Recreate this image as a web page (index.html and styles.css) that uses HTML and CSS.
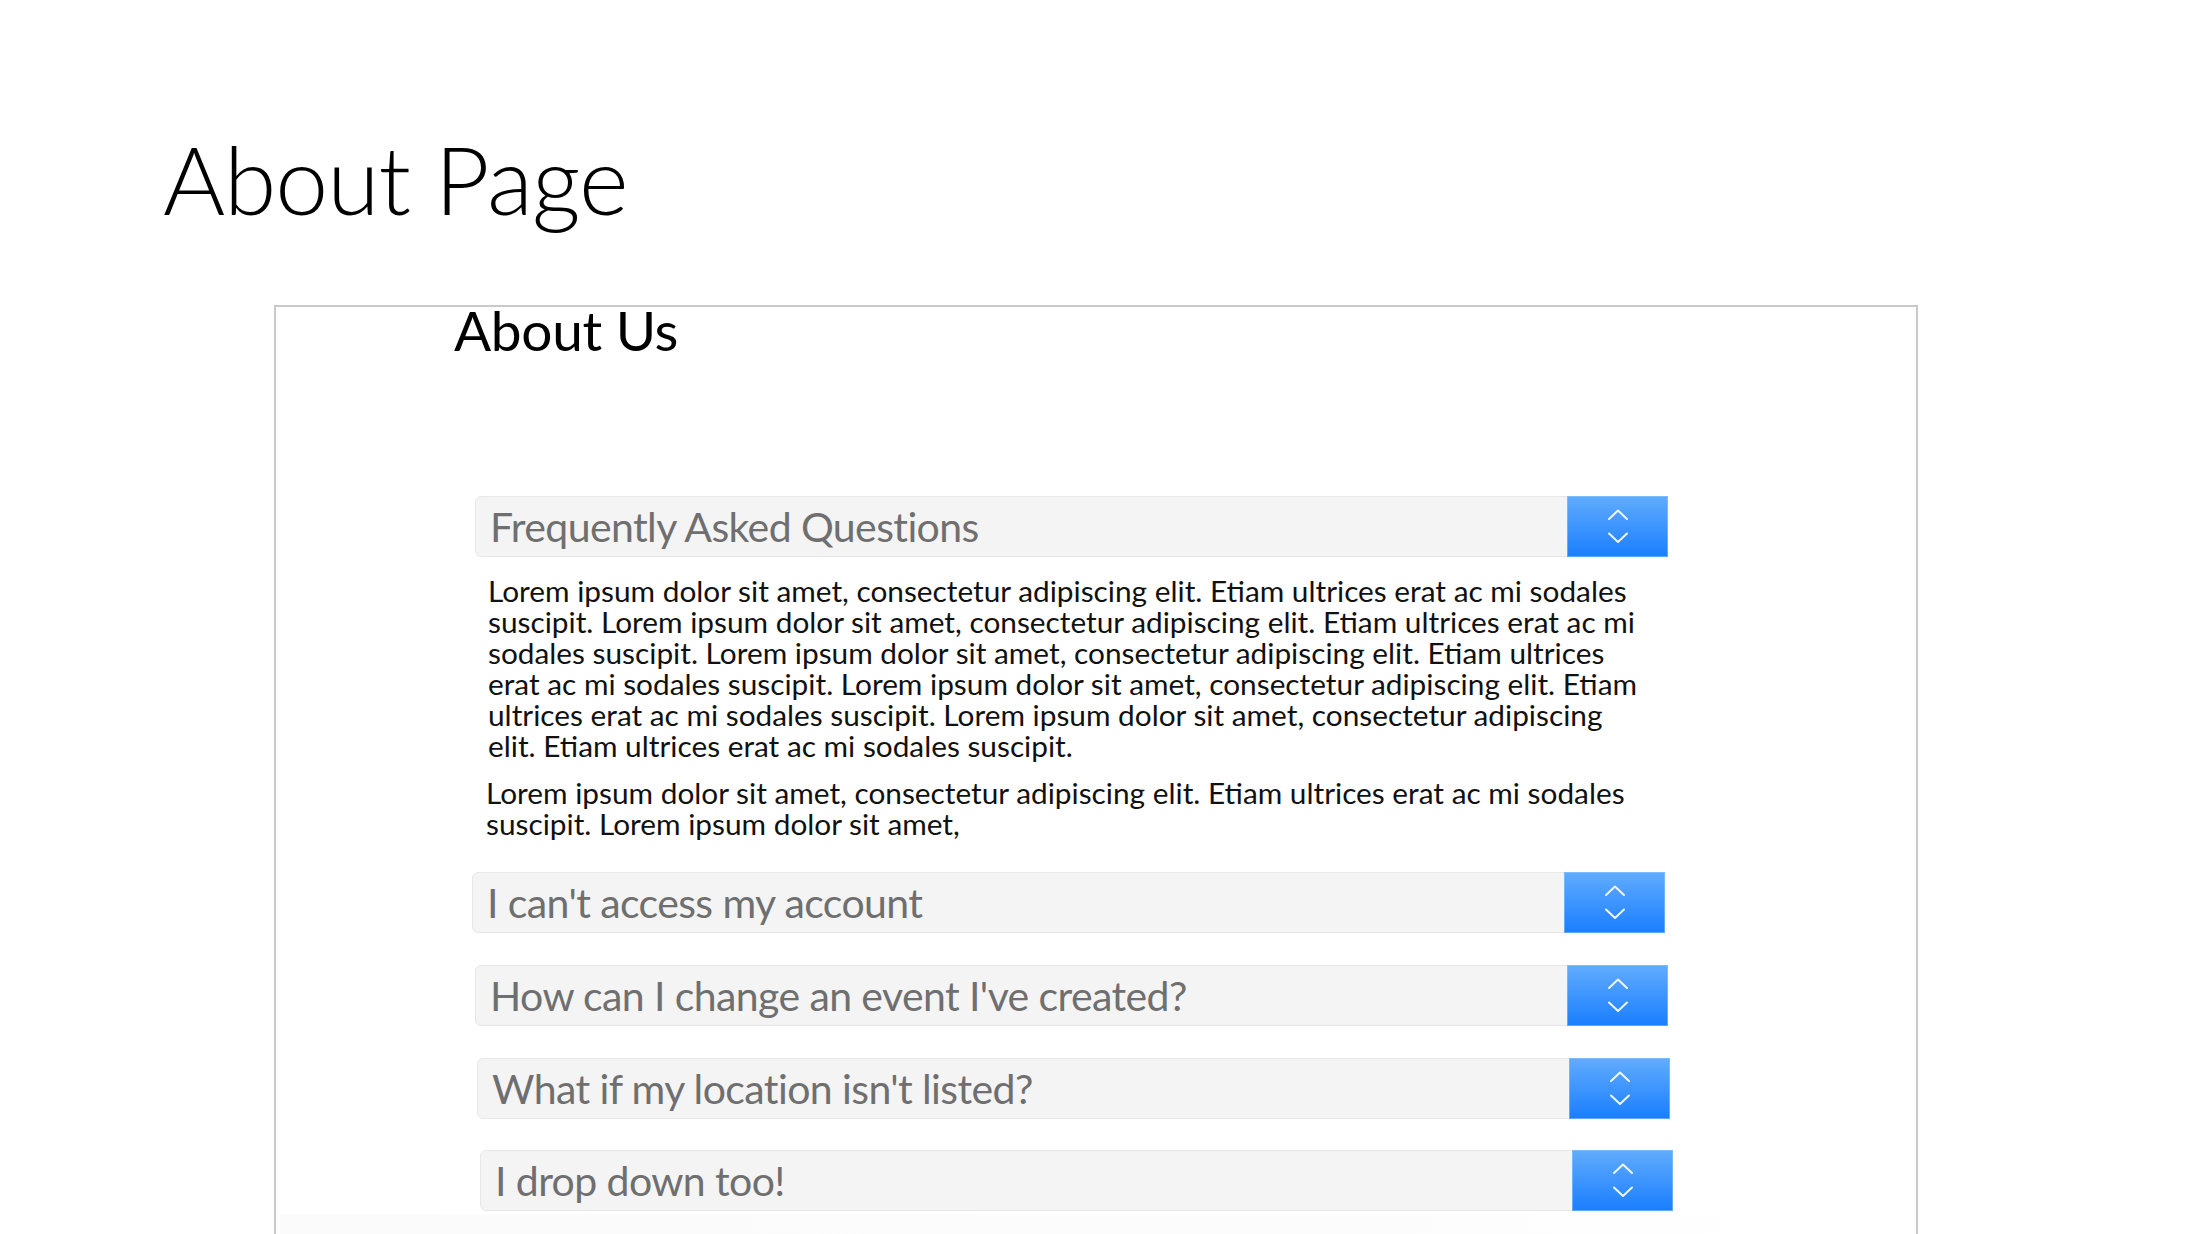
FILE: index.html
```html
<!DOCTYPE html>
<html lang="en">
<head>
<meta charset="utf-8">
<title>About Page</title>
<link rel="stylesheet" href="styles.css">
</head>
<body>
<div class="page">
  <h1 class="page-title">About Page</h1>
  <section class="frame">
    <h2 class="frame-title">About Us</h2>
    <div class="faq">
      <div class="dropdown dd-1">
        <span class="dd-label">Frequently Asked Questions</span>
        <span class="dd-btn"><svg width="22" height="36" viewBox="0 0 22 36"><polyline points="2,10 11,1.5 20,10"/><polyline points="2,24.5 11,33 20,24.5"/></svg></span>
      </div>
      <p class="answer a-1">Lorem ipsum dolor sit amet, consectetur adipiscing elit. Etiam ultrices erat ac mi sodales<br>suscipit. Lorem ipsum dolor sit amet, consectetur adipiscing elit. Etiam ultrices erat ac mi<br>sodales suscipit. Lorem ipsum dolor sit amet, consectetur adipiscing elit. Etiam ultrices<br>erat ac mi sodales suscipit. Lorem ipsum dolor sit amet, consectetur adipiscing elit. Etiam<br>ultrices erat ac mi sodales suscipit. Lorem ipsum dolor sit amet, consectetur adipiscing<br>elit. Etiam ultrices erat ac mi sodales suscipit.</p>
      <p class="answer a-2">Lorem ipsum dolor sit amet, consectetur adipiscing elit. Etiam ultrices erat ac mi sodales<br>suscipit. Lorem ipsum dolor sit amet,</p>
      <div class="dropdown dd-2">
        <span class="dd-label">I can't access my account</span>
        <span class="dd-btn"><svg width="22" height="36" viewBox="0 0 22 36"><polyline points="2,10 11,1.5 20,10"/><polyline points="2,24.5 11,33 20,24.5"/></svg></span>
      </div>
      <div class="dropdown dd-3">
        <span class="dd-label">How can I change an event I've created?</span>
        <span class="dd-btn"><svg width="22" height="36" viewBox="0 0 22 36"><polyline points="2,10 11,1.5 20,10"/><polyline points="2,24.5 11,33 20,24.5"/></svg></span>
      </div>
      <div class="dropdown dd-4">
        <span class="dd-label">What if my location isn't listed?</span>
        <span class="dd-btn"><svg width="22" height="36" viewBox="0 0 22 36"><polyline points="2,10 11,1.5 20,10"/><polyline points="2,24.5 11,33 20,24.5"/></svg></span>
      </div>
      <div class="dropdown dd-5">
        <span class="dd-label">I drop down too!</span>
        <span class="dd-btn"><svg width="22" height="36" viewBox="0 0 22 36"><polyline points="2,10 11,1.5 20,10"/><polyline points="2,24.5 11,33 20,24.5"/></svg></span>
      </div>
      <div class="fade"></div>
    </div>
  </section>
</div>
</body>
</html>
```
FILE: styles.css
```css
html, body {
  margin: 0;
  padding: 0;
  background: #ffffff;
}
body {
  height: 1234px;
  overflow: hidden;
  font-family: Lato, "Open Sans", sans-serif;
  color: #111111;
}
.page {
  display: flex;
  flex-direction: column;
  height: 100%;
}
.page-title {
  margin: 131px 0 0 163px;
  font-family: Lato, sans-serif;
  font-weight: 300;
  font-size: 95px;
  line-height: 95px;
  height: 95px;
  color: #000000;
  letter-spacing: -1px;
}
.frame {
  margin: 79px 0 0 274px;
  width: 1644px;
  box-sizing: border-box;
  flex: 1;
  border: 2px solid #c9c9c9;
  border-bottom: none;
}
.frame-title {
  margin: 3px 0 0 178px;
  font-family: Lato, sans-serif;
  font-weight: 400;
  font-size: 55px;
  line-height: 40px;
  height: 40px;
  color: #000000;
  letter-spacing: -0.3px;
}
.faq {
  display: flex;
  flex-direction: column;
  margin-top: 146px;
}
.dropdown {
  display: flex;
  align-items: stretch;
  width: 1193px;
  height: 61px;
  box-sizing: border-box;
  background: #f4f4f4;
  border: 1px solid #e8e8e8;
  border-radius: 6px 0 0 6px;
  margin-left: 199px;
}
.dd-2 { margin-left: 196px; margin-top: 33px; }
.dd-3 { margin-left: 199px; margin-top: 32px; }
.dd-4 { margin-left: 201px; margin-top: 32px; }
.dd-5 { margin-left: 204px; margin-top: 31px; }
.dd-label {
  flex: 1;
  display: flex;
  align-items: center;
  padding-left: 14px;
  font-family: Lato, sans-serif;
  font-size: 41px;
  color: #6f6f6f;
  white-space: nowrap;
  letter-spacing: -0.6px;
}
.dd-btn {
  width: 101px;
  margin: -1px -1px -1px 0;
  display: flex;
  align-items: center;
  justify-content: center;
  background: linear-gradient(#61acfd, #1a7eff);
  box-shadow: inset 0 0 0 1px rgba(150, 200, 255, 0.55);
}
.dd-btn svg {
  display: block;
}
.dd-btn polyline {
  fill: none;
  stroke: #eef5ff;
  stroke-width: 2;
  stroke-linecap: round;
  stroke-linejoin: round;
}
.answer {
  margin: 0;
  font-family: Lato, sans-serif;
  font-size: 29.8px;
  line-height: 31px;
  color: #111111;
  white-space: nowrap;
}
.a-1 { margin: 18px 0 0 212px; }
.a-2 { margin: 16px 0 0 210px; }
.fade {
  margin-top: 3px;
  margin-left: 4px;
  width: 1500px;
  height: 30px;
  background: linear-gradient(90deg, #fbfbfb 0%, #fcfcfc 70%, rgba(255,255,255,0) 100%);
}
```
